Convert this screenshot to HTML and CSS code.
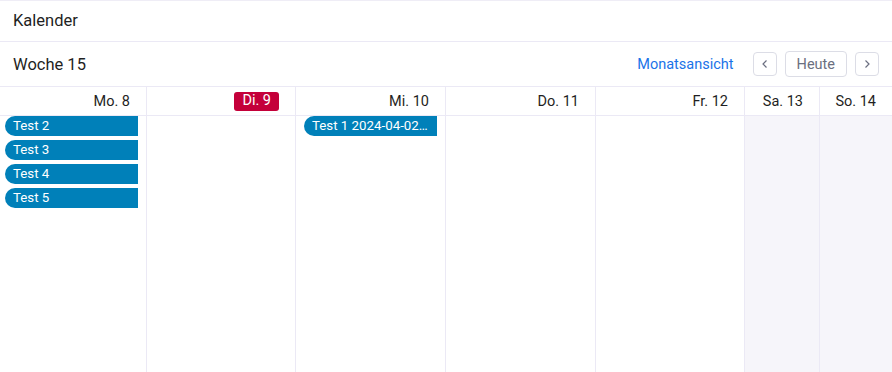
FILE: index.html
```html
<!DOCTYPE html>
<html lang="de">
<head>
<meta charset="utf-8">
<link rel="stylesheet" href="styles.css">
</head>
<body>
<div class="page">
  <header class="title-bar">Kalender</header>
  <div class="toolbar">
    <div class="week">Woche 15</div>
    <div class="actions">
      <a class="link">Monatsansicht</a>
      <button class="btn icon" aria-label="zurück"><svg width="10" height="10" viewBox="0 0 10 10"><path d="M6.5 1.5 3 5l3.5 3.5" fill="none" stroke="#6b6f80" stroke-width="1.2"/></svg></button>
      <button class="btn">Heute</button>
      <button class="btn icon" aria-label="weiter"><svg width="10" height="10" viewBox="0 0 10 10"><path d="M3.5 1.5 7 5 3.5 8.5" fill="none" stroke="#6b6f80" stroke-width="1.2"/></svg></button>
    </div>
  </div>
  <div class="grid">
    <div class="head">Mo. 8</div>
    <div class="head"><span class="today">Di. 9</span></div>
    <div class="head">Mi. 10</div>
    <div class="head">Do. 11</div>
    <div class="head">Fr. 12</div>
    <div class="head">Sa. 13</div>
    <div class="head last">So. 14</div>

    <div class="day first-col">
      <div class="event">Test 2</div>
      <div class="event">Test 3</div>
      <div class="event">Test 4</div>
      <div class="event">Test 5</div>
    </div>
    <div class="day"></div>
    <div class="day">
      <div class="event">Test 1 2024-04-02…</div>
    </div>
    <div class="day"></div>
    <div class="day"></div>
    <div class="day weekend"></div>
    <div class="day weekend last"></div>
  </div>
</div>
</body>
</html>
```
FILE: styles.css
```css
* { box-sizing: border-box; }
html, body { margin: 0; padding: 0; background: #fff; }
body {
  font-family: Roboto, "Noto Sans", "Liberation Sans", sans-serif;
  color: #1f1f23;
  width: 892px;
  height: 372px;
  overflow: hidden;
}
.page { display: flex; flex-direction: column; height: 372px; }
.title-bar {
  height: 42px;
  border-top: 1px solid #efedf6;
  border-bottom: 1px solid #ebe9f5;
  padding: 0 13px 1px;
  display: flex;
  align-items: center;
  font-size: 16.5px;
}
.toolbar {
  height: 45px;
  border-bottom: 1px solid #ebe9f5;
  display: flex;
  align-items: center;
  justify-content: space-between;
  padding: 0 13px 0 13px;
}
.week { font-size: 16.5px; }
.actions { display: flex; align-items: center; gap: 8px; }
.link { color: #1a73e8; font-size: 14.5px; margin-right: 11px; }
.btn {
  height: 26px;
  border: 1px solid #dcdde6;
  border-radius: 4px;
  background: #fff;
  font-family: inherit;
  font-size: 14.5px;
  color: #6b6f80;
  padding: 0 11px;
  display: flex;
  align-items: center;
  justify-content: center;
}
.btn.icon { width: 24px; padding: 0; height: 24px; }
.grid {
  flex: 1;
  display: grid;
  grid-template-columns: 147px 149px 150px 150px 149px 75px 1fr;
  grid-template-rows: 29px 1fr;
}
.head {
  border-right: 1px solid #ebe9f5;
  border-bottom: 1px solid #ebe9f5;
  display: flex;
  align-items: center;
  justify-content: flex-end;
  padding-right: 16px;
  font-size: 14.5px;
}
.head.last, .day.last { border-right: none; }
.today {
  background: #c4003a;
  color: #fff;
  border-radius: 3px;
  padding: 1px 8px 2px;
  line-height: 16px;
  margin-right: 0;
}
.day {
  border-right: 1px solid #ebe9f5;
  padding: 0 8px 0 8px;
  display: flex;
  flex-direction: column;
  gap: 4px;
}
.day.first-col { padding-left: 5px; }
.weekend { background: #f6f5fa; }
.event {
  height: 20px;
  background: #0080b9;
  color: #fff;
  font-size: 13.3px;
  line-height: 20px;
  padding-left: 8px;
  border-radius: 10px 0 0 10px;
  white-space: nowrap;
  overflow: hidden;
}
```
